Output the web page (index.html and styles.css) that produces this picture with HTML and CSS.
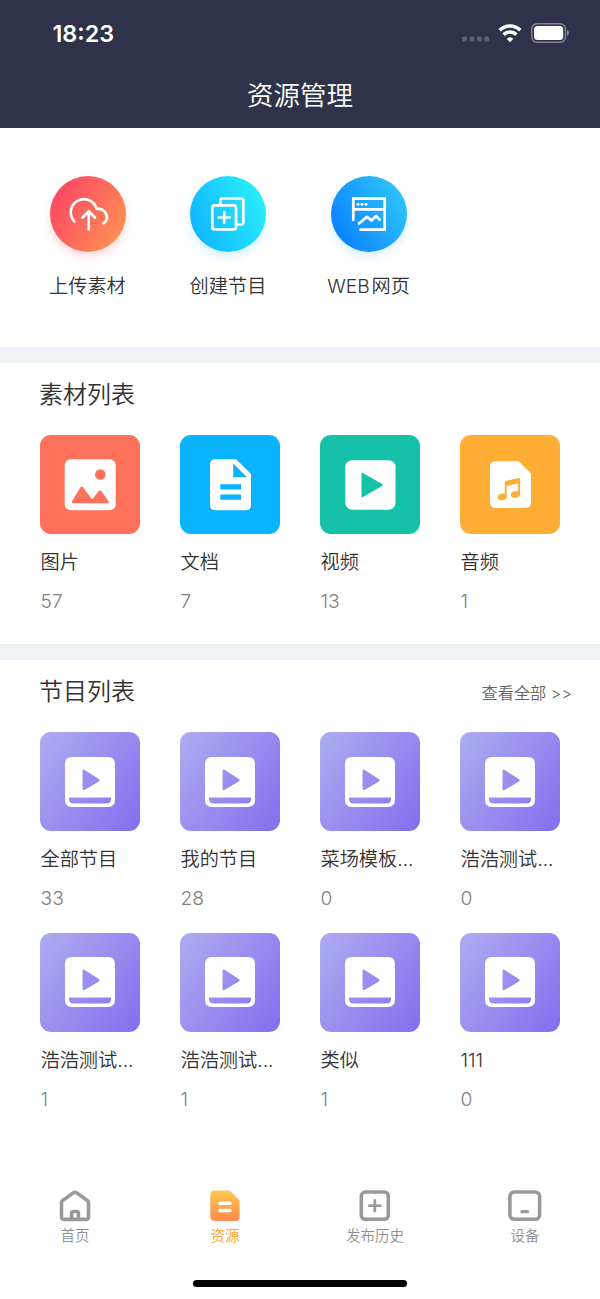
FILE: index.html
```
<!DOCTYPE html>
<html lang="zh-CN">
<head>
  <meta charset="UTF-8">
  <meta name="viewport" content="width=device-width, initial-scale=1.0">
  <title>资源管理</title>
  <link rel="stylesheet" href="styles.css">
</head>
<body>
  <!-- 公共图标 -->
  <svg class="symbols" width="0" height="0">
    <symbol id="program" viewBox="0 0 50 50">
      <path fill="#fff" fill-rule="evenodd" d="M7 0h36q7 0 7 7v36q0 7-7 7H7q-7 0-7-7V7Q0 0 7 0zM17.500 14v17.500q0 2.600 2.300 1.300l14-8.300q1.700-1.200 0-2.400l-14-9q-2.300-1.300-2.300 .9zM4 40.500v1.500q0 4.500 4.500 4.500h33q4.500 0 4.500-4.500v-1.500z"/>
    </symbol>
  </svg>

  <header class="header">
    <div class="status-bar">
      <span class="time">18:23</span>
      <div class="status-icons">
        <svg width="28" height="6" viewBox="0 0 28 6" fill="#5d6172">
          <rect x="0" y="0.500" width="5" height="5" rx="1.500"/>
          <rect x="7.500" y="0.500" width="5" height="5" rx="1.500"/>
          <rect x="15" y="0.500" width="5" height="5" rx="1.500"/>
          <rect x="22.200" y="0.500" width="5" height="5" rx="1.500"/>
        </svg>
        <svg class="wifi" width="24" height="20" viewBox="0 0 24 20" fill="none" stroke="#fff" stroke-width="3.600">
          <path d="M1.700 7.300a14.600 14.600 0 0 1 20.600 0"/>
          <path d="M5.600 11.600a9.200 9.200 0 0 1 12.800 0"/>
          <path d="M8.700 15.800a4.800 4.800 0 0 1 6.600 0L12 19.200z" fill="#fff" stroke="none"/>
        </svg>
        <svg class="battery" width="39" height="20" viewBox="0 0 39 20">
          <rect x="0.700" y="0.700" width="33.800" height="18.600" rx="5.500" fill="none" stroke="#82869a" stroke-width="1.400"/>
          <rect x="3" y="3" width="29.200" height="14" rx="3.500" fill="#fff"/>
          <path d="M36 7v6q2-.8 2-3t-2-3z" fill="#82869a"/>
        </svg>
      </div>
    </div>
    <h1>资源管理</h1>
  </header>

  <main>
    <section class="actions">
      <a class="action">
        <span class="circle upload">
          <svg width="76" height="76" viewBox="0 0 76 76" fill="none" stroke="#fff" stroke-width="2.700" stroke-linecap="round" stroke-linejoin="round">
            <path d="M24.300 45.400A13.200 13.200 0 1 1 46.700 33C55 31.800 61 42 53.500 47.300M38.700 53.500V35.500M32.500 41.500l6.200-6.300 6.200 6.300"/>
          </svg>
        </span>
        <span class="action-name">上传素材</span>
      </a>
      <a class="action">
        <span class="circle create">
          <svg width="76" height="76" viewBox="0 0 76 76" fill="none" stroke="#fff" stroke-width="2.700" stroke-linecap="round" stroke-linejoin="round">
            <rect x="22.300" y="29.300" width="23.700" height="24.200" rx="2.500"/>
            <path d="M30.300 29v-4.500q0-2 2-2h19q2 0 2 2v22q0 2-2 2h-5M34.200 36v11M28.700 41.500h11"/>
          </svg>
        </span>
        <span class="action-name">创建节目</span>
      </a>
      <a class="action">
        <span class="circle web">
          <svg width="76" height="76" viewBox="0 0 76 76" fill="none" stroke="#fff" stroke-width="2.700" stroke-linecap="round">
            <path d="M22.300 44V22.700h31.400v31H29.500M22.300 33.300h31.400"/>
            <path d="M28 47.500l8-6.600 4.500 3.600 4.700-4.600 3.300 3.600" stroke-linejoin="round"/>
            <g fill="#fff" stroke="none"><circle cx="27" cy="28.300" r="1.500"/><circle cx="31" cy="28.300" r="1.500"/><circle cx="35" cy="28.300" r="1.500"/></g>
          </svg>
        </span>
        <span class="action-name">WEB<i></i>网页</span>
      </a>
    </section>

    <section class="panel materials">
      <div class="panel-head">
        <h2>素材列表</h2>
      </div>
      <div class="grid">
        <a class="item">
          <span class="tile image">
            <svg width="100" height="99" viewBox="0 0 100 99">
              <rect x="24.700" y="24.200" width="51" height="51" rx="6" fill="#fff"/>
              <circle cx="60.300" cy="39.500" r="5.300" fill="#ff715a"/>
              <path d="M32 66.300l8.500-14q1.200-1.600 2.400 0l9.300 12.300 6.500-8.600q1.300-1.400 2.500 0l7.500 10.500q.8 1.500-1 1.700H33q-2-.2-1-1.900z" fill="#ff715a"/>
            </svg>
          </span>
          <span class="name">图片</span>
          <span class="count">57</span>
        </a>
        <a class="item">
          <span class="tile doc">
            <svg width="100" height="99" viewBox="0 0 100 99">
              <path fill="#fff" fill-rule="evenodd" d="M35 24.200h21.200L71 39v31q0 5.200-5.200 5.200H35.200q-5.200 0-5.200-5.200V29.400q0-5.200 5-5.200zM53.200 28.500v13.700H67zM40.300 49.200v5.300H61v-5.300zM40.300 59.500v5.300H61v-5.300z"/>
            </svg>
          </span>
          <span class="name">文档</span>
          <span class="count">7</span>
        </a>
        <a class="item">
          <span class="tile video">
            <svg width="100" height="99" viewBox="0 0 100 99">
              <rect x="25.300" y="25.300" width="50.200" height="49.500" rx="7" fill="#fff"/>
              <path d="M41.500 38.500v23q0 1.200 1 .7l20-11.400q.8-.8 0-1.500l-20-11.500q-1-.4-1 .7z" fill="#16c1a9"/>
            </svg>
          </span>
          <span class="name">视频</span>
          <span class="count">13</span>
        </a>
        <a class="item">
          <span class="tile audio">
            <svg width="100" height="99" viewBox="0 0 100 99">
              <path fill="#fff" d="M36 26.200h22.800L71 38.500v28.700q0 5.800-5.800 5.800H35.800q-5.800 0-5.800-5.800V32q0-5.800 6-5.800z"/>
              <g fill="#ffae35">
                <ellipse cx="42.200" cy="62" rx="4.600" ry="3.300" transform="rotate(-12 42.200 62)"/>
                <ellipse cx="55.500" cy="59.500" rx="4.600" ry="3.300" transform="rotate(-12 55.500 59.500)"/>
                <path d="M44.800 61.500V47.200q0-1 1-1.300l13-2.800q1.300-.2 1.300 1v15.600h-1.900V48.500l-11.500 2.600v10.400z"/>
              </g>
            </svg>
          </span>
          <span class="name">音频</span>
          <span class="count">1</span>
        </a>
      </div>
    </section>

    <section class="panel programs">
      <div class="panel-head">
        <h2>节目列表</h2>
        <a class="more">查看全部 &gt;&gt;</a>
      </div>
      <div class="grid">
        <a class="item">
          <span class="tile program"><svg width="50" height="50"><use href="#program"/></svg></span>
          <span class="name">全部节目</span>
          <span class="count">33</span>
        </a>
        <a class="item">
          <span class="tile program"><svg width="50" height="50"><use href="#program"/></svg></span>
          <span class="name">我的节目</span>
          <span class="count">28</span>
        </a>
        <a class="item">
          <span class="tile program"><svg width="50" height="50"><use href="#program"/></svg></span>
          <span class="name">菜场模板...</span>
          <span class="count">0</span>
        </a>
        <a class="item">
          <span class="tile program"><svg width="50" height="50"><use href="#program"/></svg></span>
          <span class="name">浩浩测试...</span>
          <span class="count">0</span>
        </a>
        <a class="item">
          <span class="tile program"><svg width="50" height="50"><use href="#program"/></svg></span>
          <span class="name">浩浩测试...</span>
          <span class="count">1</span>
        </a>
        <a class="item">
          <span class="tile program"><svg width="50" height="50"><use href="#program"/></svg></span>
          <span class="name">浩浩测试...</span>
          <span class="count">1</span>
        </a>
        <a class="item">
          <span class="tile program"><svg width="50" height="50"><use href="#program"/></svg></span>
          <span class="name">类似</span>
          <span class="count">1</span>
        </a>
        <a class="item">
          <span class="tile program"><svg width="50" height="50"><use href="#program"/></svg></span>
          <span class="name">111</span>
          <span class="count">0</span>
        </a>
      </div>
    </section>
  </main>

  <!-- 底部导航 -->
  <footer>
    <nav class="tab-bar">
      <a class="tab">
        <svg width="34" height="32" viewBox="0 0 34 32" fill="none" stroke="#999" stroke-width="3.600" stroke-linejoin="round">
          <path d="M3.500 12.700q0-1.400 1.200-2.200L15.200 2.900q1.800-1.300 3.600 0l10.500 7.600q1.200.8 1.200 2.200v14.400q0 2.300-2.300 2.300H5.800q-2.300 0-2.300-2.300z"/>
          <path d="M13.600 29.500v-6q0-2 2-2h2.800q2 0 2 2v6"/>
        </svg>
        <span>首页</span>
      </a>
      <a class="tab active">
        <svg width="34" height="32" viewBox="0 0 34 32">
          <defs>
            <linearGradient id="orange" x1="0" y1="0" x2="0" y2="1">
              <stop offset="0" stop-color="#ffc94b"/>
              <stop offset="1" stop-color="#ff8a51"/>
            </linearGradient>
          </defs>
          <path d="M6.500 .500h14q1 0 1.800.8l8.600 8.400q.7.700.7 1.700v15q0 4.500-4.500 4.500H6.800q-4.500 0-4.500-4.500V5Q2.300.500 6.500.500z" fill="url(#orange)"/>
          <path d="M12 13.300h10M12 20.500h10" stroke="#fff" stroke-width="3.500" stroke-linecap="round"/>
        </svg>
        <span>资源</span>
      </a>
      <a class="tab">
        <svg width="34" height="32" viewBox="0 0 34 32" fill="none" stroke="#999" stroke-width="3.600" stroke-linecap="round">
          <rect x="3.300" y="2" width="27" height="27.300" rx="4"/>
          <path d="M16.800 10.300v10.800M11.400 15.700h10.800" stroke-width="2.800"/>
        </svg>
        <span>发布历史</span>
      </a>
      <a class="tab">
        <svg width="34" height="32" viewBox="0 0 34 32" fill="none" stroke="#999" stroke-width="3.600" stroke-linecap="round">
          <rect x="1.900" y="2" width="29.700" height="27.300" rx="4.500"/>
          <path d="M14 21.700h5.600" stroke-width="3.300"/>
        </svg>
        <span>设备</span>
      </a>
    </nav>
    <div class="home-indicator"></div>
  </footer>
</body>
</html>
```

FILE: styles.css
```
* {
  box-sizing: border-box;
  margin: 0;
  padding: 0;
}

body {
  display: flex;
  flex-direction: column;
  height: 1299px;
  background: #fff;
  color: #333;
  font-family: Inter, 'Noto Sans CJK SC', sans-serif;
  font-size: 19.2px;
  font-weight: 350;
  overflow: hidden;
}

svg {
  display: block;
}

.symbols {
  position: absolute;
}

.header {
  height: 127.500px;
  background: #2e3349;
  color: #fff;
}

.status-bar {
  display: flex;
  justify-content: space-between;
  height: 66px;
  padding: 0 30px 0 52.500px;
}

.time {
  font-size: 23.300px;
  font-weight: 600;
  line-height: 67px;
}

.status-icons {
  display: flex;
  align-items: center;
}

.status-icons svg:first-child {
  margin-top: 12px;
}

.wifi {
  margin: -1px 9px 0 8px;
}

h1 {
  font-size: 26.500px;
  font-weight: 350;
  line-height: 58px;
  text-align: center;
}

.actions {
  display: flex;
  height: 219.500px;
  padding: 48.500px 0 0 17.600px;
}

.action {
  display: flex;
  flex-direction: column;
  align-items: center;
  width: 140.600px;
}

.circle {
  width: 76px;
  height: 76px;
  border-radius: 50%;
}

.upload {
  background: linear-gradient(120deg, #fa4564 10%, #ff8c53 85%);
  box-shadow: 0 5px 8px rgba(250, 69, 100, 0.2);
}

.create {
  background: linear-gradient(65deg, #0fb5ff 10%, #2aeffa 90%);
  box-shadow: 0 5px 8px rgba(20, 185, 255, 0.18);
}

.web {
  background: linear-gradient(60deg, #0b85ff 15%, #2dc1fb 85%);
  box-shadow: 0 5px 8px rgba(20, 160, 255, 0.16);
}

.action-name {
  margin: 19px 1px 0 0;
  line-height: 30px;
}

.action-name i {
  display: inline-block;
  width: 2px;
}

.panel {
  border-top: 16px solid #eef2f6;
}

.materials {
  height: 296.500px;
}

.panel-head {
  display: flex;
  justify-content: space-between;
  height: 72.500px;
  padding: 0 28px 0 39px;
}

.materials .panel-head {
  height: 71.800px;
}

h2 {
  font-size: 24px;
  font-weight: 350;
  line-height: 64px;
}

.more {
  color: #666;
  font-size: 16.200px;
  line-height: 66px;
}

.grid {
  display: grid;
  grid-template-columns: repeat(4, 100px);
  column-gap: 40px;
  padding-left: 40px;
}

.item {
  display: flex;
  flex-direction: column;
  height: 200.500px;
}

.tile {
  display: flex;
  align-items: center;
  justify-content: center;
  height: 99px;
  border-radius: 11px;
}

.image {
  background: #ff715a;
}

.doc {
  background: #09b3ff;
}

.video {
  background: #16c1a9;
}

.audio {
  background: #ffae35;
}

.program {
  background: linear-gradient(125deg, #abaaf0 5%, #8770ee 95%);
}

.name {
  margin-top: 8px;
  padding-left: 0.500px;
  line-height: 40px;
  white-space: nowrap;
}

.count {
  padding-left: 0.500px;
  color: #808080;
  line-height: 38px;
}

footer {
  margin-top: auto;
  height: 119px;
}

.tab-bar {
  display: flex;
  padding-top: 10px;
}

.tab {
  display: flex;
  flex-direction: column;
  align-items: center;
  width: 150px;
  color: #909090;
  font-size: 14.500px;
  line-height: 24px;
}

.tab span {
  margin-top: 2px;
}

.active {
  color: #fba020;
}

.home-indicator {
  width: 214px;
  height: 7px;
  margin: 32px auto 0;
  border-radius: 4px;
  background: #000;
}
```
